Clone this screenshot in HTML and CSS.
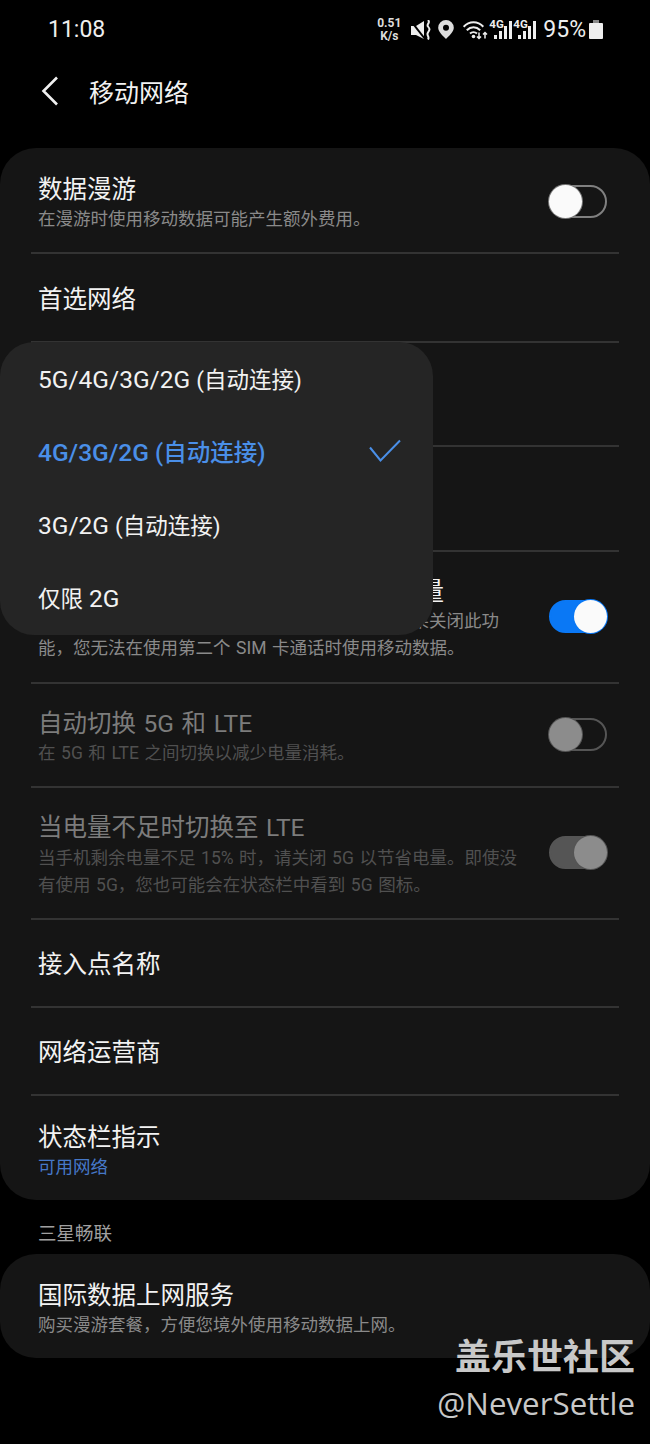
FILE: index.html
```html
<!DOCTYPE html>
<html lang="zh-CN">
<head>
    <meta charset="UTF-8">
    <title>移动网络</title>
    <link rel="stylesheet" href="styles.css">
</head>
<body>

    <div class="status-bar">
        <span class="clock">11:08</span>
        <div class="status-icons">
            <span class="speed">0.51<br>K/s</span>
            <!-- vibrate / mute -->
            <svg class="icon-mute" width="20" height="20" viewBox="0 0 20 20">
                <path d="M0 6h5l8-5v18l-8-4H0z" fill="#eee"/>
                <path d="M0 1l14 18" stroke="#000" stroke-width="2"/>
                <path d="M17 0c3 3-2 4 0 6.500s2 3 0 6 2 4 0 7" fill="none" stroke="#eee" stroke-width="2"/>
            </svg>
            <!-- location -->
            <svg class="icon-pin" width="16" height="19" viewBox="0 0 16 19">
                <path fill-rule="evenodd" d="M8 0a7.800 7.800 0 0 1 7.800 7.800C15.800 12 11 16 8 19 5 16 .2 12 .2 7.800A7.800 7.800 0 0 1 8 0zm0 4.800a3 3 0 1 0 0 6 3 3 0 0 0 0-6z" fill="#ddd"/>
            </svg>
            <!-- wifi -->
            <svg class="icon-wifi" width="25" height="20" viewBox="0 0 25 20">
                <path d="M.7 6.800c5.500-6 14.100-6 19.600 0M3.800 10.300c4-4 9.400-4 13.400 0M7 13.500c2-1.800 5-1.800 7 0" fill="none" stroke="#eee" stroke-width="2"/>
                <circle cx="10.500" cy="16.500" r="1.800" fill="#eee"/>
                <path d="M16 12.500v6M14 16.500l2 2 2-2M22 18.500v-6M20 14.500l2-2 2 2" fill="none" stroke="#eee" stroke-width="1.500"/>
            </svg>
            <div class="signal">
                <span class="signal-label">4G</span>
                <span class="bars"><i class="b1"></i><i class="b2"></i><i class="b3"></i><i class="b4"></i></span>
            </div>
            <div class="signal">
                <span class="signal-label">4G</span>
                <span class="bars"><i class="b1"></i><i class="b2"></i><i class="b3"></i><i class="b4"></i></span>
            </div>
            <span class="battery-text">95%</span>
            <span class="battery"></span>
        </div>
    </div>

    <div class="app-bar">
        <svg class="back" width="18" height="30" viewBox="0 0 18 30">
            <path d="M16 1.500L2.500 15 16 28.500" fill="none" stroke="#f0f0f0" stroke-width="2.600"/>
        </svg>
        <h1>移动网络</h1>
    </div>

    <div class="card">
        <div class="row row-first">
            <div class="row-text">
                <div class="title">数据漫游</div>
                <div class="sub">在漫游时使用移动数据可能产生额外费用。</div>
            </div>
            <span class="switch"></span>
        </div>
        <div class="row row-plain row-network">
            <div class="title">首选网络</div>
        </div>
        <div class="row row-hidden-a"></div>
        <div class="row row-hidden-b"></div>
        <!-- the popup hides the start of this row, only the visible ends are written -->
        <div class="row row-dual">
            <div class="row-text">
                <div class="title">量</div>
                <div class="sub sub-cut">果关闭此功</div>
                <div class="sub">能，您无法在使用第二个 SIM 卡通话时使用移动数据。</div>
            </div>
            <span class="switch on"></span>
        </div>
        <div class="row row-switch5g dim">
            <div class="row-text">
                <div class="title">自动切换 5G 和 LTE</div>
                <div class="sub">在 5G 和 LTE 之间切换以减少电量消耗。</div>
            </div>
            <span class="switch"></span>
        </div>
        <div class="row row-battery dim">
            <div class="row-text">
                <div class="title">当电量不足时切换至 LTE</div>
                <div class="sub">当手机剩余电量不足 15% 时，请关闭 5G 以节省电量。即使没<br>有使用 5G，您也可能会在状态栏中看到 5G 图标。</div>
            </div>
            <span class="switch on"></span>
        </div>
        <div class="row row-plain">
            <div class="title">接入点名称</div>
        </div>
        <div class="row row-plain">
            <div class="title">网络运营商</div>
        </div>
        <div class="row row-last">
            <div class="row-text">
                <div class="title">状态栏指示</div>
                <div class="sub link">可用网络</div>
            </div>
        </div>
    </div>

    <div class="section-label">三星畅联</div>

    <div class="card card-small">
        <div class="row row-last">
            <div class="row-text">
                <div class="title">国际数据上网服务</div>
                <div class="sub">购买漫游套餐，方便您境外使用移动数据上网。</div>
            </div>
        </div>
    </div>

    <!-- dropdown opened from 首选网络 -->
    <ul class="popup">
        <li><span>5G/4G/3G/2G <span class="cjk">(自动连接)</span></span></li>
        <li class="selected"><span>4G/3G/2G <span class="cjk">(自动连接)</span></span>
            <svg width="32" height="24" viewBox="0 0 32 24"><path d="M1 8.500L11.500 21.500 31 1.500" fill="none" stroke="#4a8fe8" stroke-width="2"/></svg>
        </li>
        <li><span>3G/2G <span class="cjk">(自动连接)</span></span></li>
        <li><span><span class="cjk">仅限</span> 2G</span></li>
    </ul>

    <div class="watermark">
        <div class="wm-name">盖乐世社区</div>
        <div class="wm-user">@NeverSettle</div>
    </div>

</body>
</html>
```

FILE: styles.css
```css
body {
    margin: 0;
    height: 1444px;
    overflow: hidden;
    background-color: #000;
    color: #f2f2f2;
    font-family: Roboto, "Noto Sans CJK SC", sans-serif;
    position: relative;
}

.status-bar {
    height: 58px;
    display: flex;
    justify-content: space-between;
    align-items: center;
    padding: 1px 47px 0 48px;
    box-sizing: border-box;
}

.clock {
    font-size: 23px;
    color: #eee;
}

.status-icons {
    display: flex;
    align-items: center;
}

.speed {
    font-size: 12px;
    line-height: 13px;
    font-weight: 700;
    text-align: center;
    color: #ddd;
    width: 26px;
    margin-right: 9px;
}

.icon-mute {
    margin-right: 7px;
}

.icon-pin {
    margin-right: 9px;
}

.signal {
    width: 23px;
    height: 18px;
    margin-left: 1px;
    position: relative;
}

.signal-label {
    position: absolute;
    left: 0;
    top: -1px;
    font-size: 11.500px;
    line-height: 9px;
    font-weight: 700;
    color: #eee;
}

.bars {
    display: flex;
    align-items: flex-end;
    justify-content: flex-end;
    gap: 2px;
    height: 18px;
}

.bars i {
    display: block;
    width: 3px;
    background-color: #eee;
}

.bars .b1 { height: 4px; }
.bars .b2 { height: 8px; }
.bars .b3 { height: 13px; }
.bars .b4 { height: 18px; }

.battery-text {
    font-size: 23px;
    color: #eee;
    margin-left: 7px;
    margin-right: 3px;
}

.battery {
    display: block;
    width: 14px;
    height: 16px;
    background-color: #eee;
    border-radius: 1px;
    position: relative;
    margin-top: 3px;
}

.battery::before {
    content: "";
    position: absolute;
    left: 4px;
    top: -3px;
    width: 6px;
    height: 3px;
    background-color: #888;
}

.app-bar {
    height: 90px;
    display: flex;
    align-items: center;
    padding: 0 0 24px 41px;
    box-sizing: border-box;
}

.back {
    margin-right: 30px;
}

h1 {
    margin: 0;
    font-size: 25px;
    font-weight: 400;
    color: #f2f2f2;
}

.card {
    background-color: #151515;
    border-radius: 36px;
    height: 1052px;
    display: flex;
    flex-direction: column;
}

.card-small {
    height: 104px;
}

.row {
    margin: 0 31px;
    padding: 0 12px 0 7px;
    display: flex;
    align-items: center;
    justify-content: space-between;
    border-bottom: 2px solid #333;
    box-sizing: border-box;
}

.row-first { height: 106px; }
.row-plain { height: 88px; }
.row-network { height: 89px; }
.row-hidden-a { height: 104px; }
.row-hidden-b { height: 105px; }
.row-dual { height: 132px; }
.row-switch5g { height: 104px; }
.row-battery { height: 132px; }

.row-last {
    flex: 1;
    border-bottom: none;
}

.row-text {
    padding-top: 4px;
}

.row-first .row-text,
.row-last .row-text {
    padding-top: 6px;
}

.row-plain .title {
    padding-top: 4px;
}

.row-dual .title {
    text-align: right;
    width: 406px;
}

.row-battery .title {
    margin-bottom: 1px;
}

.title {
    font-size: 24.500px;
    line-height: 32px;
    word-spacing: 1.500px;
    white-space: nowrap;
}

.sub {
    font-size: 17.500px;
    line-height: 27px;
    word-spacing: 1.200px;
    color: #8a8a8a;
    white-space: nowrap;
}

.sub-cut {
    text-align: right;
    width: 461px;
}

.link {
    color: #4678c8;
}

.dim .title {
    color: #7c7c7c;
}

.dim .sub {
    color: #505050;
}

.switch {
    display: block;
    flex: none;
    width: 58px;
    height: 33px;
    margin-top: -2px;
    border: 2px solid #808080;
    border-radius: 18px;
    box-sizing: border-box;
    position: relative;
}

.row-first .switch {
    margin-top: 2px;
}

.switch::after {
    content: "";
    position: absolute;
    left: -2px;
    top: -2px;
    width: 33px;
    height: 33px;
    border-radius: 50%;
    background-color: #fafafa;
    box-shadow: 0 0 0 1px #777;
}

.switch.on {
    background-color: #0a78f5;
    border-color: #0a78f5;
}

.switch.on::after {
    left: auto;
    right: -2px;
    box-shadow: 0 0 0 1px #0a78f5;
}

.dim .switch {
    border-color: #555;
}

.dim .switch::after {
    background-color: #8c8c8c;
    box-shadow: 0 0 0 1px #555;
}

.dim .switch.on {
    background-color: #555;
    border-color: #555;
}

.section-label {
    height: 54px;
    padding: 21px 0 0 38px;
    box-sizing: border-box;
    font-size: 18.500px;
    line-height: 26px;
    color: #a0a0a0;
}

.popup {
    position: absolute;
    left: 0;
    top: 342px;
    width: 433px;
    height: 293px;
    margin: 0;
    padding: 0 0 2px;
    box-sizing: border-box;
    list-style: none;
    background-color: #252525;
    border-radius: 34px;
    display: flex;
    flex-direction: column;
}

.popup li {
    flex: 1;
    display: flex;
    align-items: center;
    justify-content: space-between;
    padding: 0 32px 0 38px;
    font-size: 24.500px;
}

.popup .cjk {
    font-size: 22.500px;
}

.popup .selected {
    color: #4a8fe8;
    font-weight: 500;
}

.popup .selected .cjk {
    font-size: 23.500px;
}

.watermark {
    position: absolute;
    right: 15px;
    top: 1335px;
    text-align: right;
    color: #c8c8c8;
}

.wm-name {
    font-size: 36px;
    line-height: 47px;
    font-weight: 700;
}

.wm-user {
    font-size: 31.300px;
    line-height: 42px;
    font-family: "Open Sans", sans-serif;
}
```
